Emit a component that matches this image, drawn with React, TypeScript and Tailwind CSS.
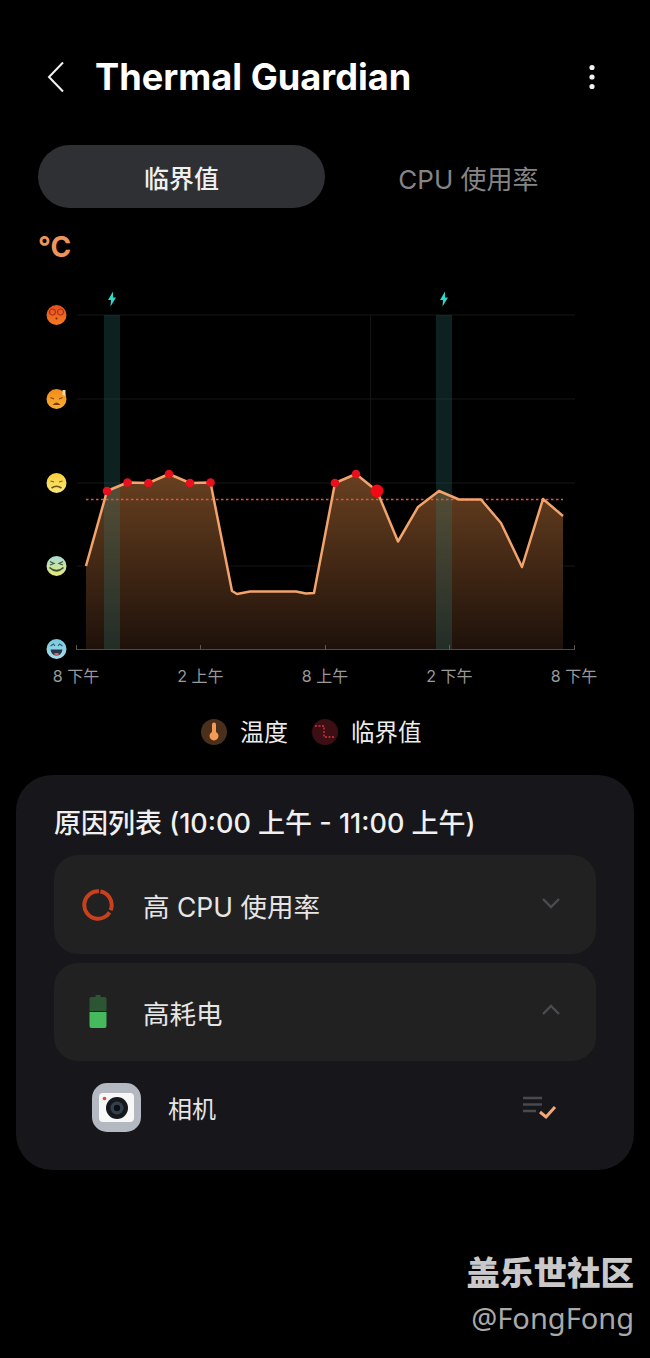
import React from 'react'

const CJK = "font-['Inter','Noto_Sans_CJK_SC',sans-serif]"

const tempPoints: Array<[number, number]> = [
  [86, 566], [107, 491], [127.5, 482.5], [148.5, 483], [169, 474], [190, 483], [210.5, 482.5],
  [232, 591], [237, 594], [250, 591.5], [296, 591.5], [306, 593.5], [314, 593], [335, 483],
  [356, 474], [377, 491], [398, 541.5], [418, 507], [439, 491], [459, 499.5], [481, 499.5],
  [501, 523], [522, 567], [543, 499], [563, 516],
]

const overLimit: Array<[number, number]> = [
  [107, 491], [127.5, 482.5], [148.5, 483], [169, 474], [190, 483], [210.5, 482.5], [335, 483], [356, 474],
]

const linePath = tempPoints.map(([x, y]) => `${x},${y}`).join(' ')
const areaPath = `86,649.5 ${linePath} 563,649.5`

function Face({ y, top, bottom, children }: { y: number; top: string; bottom: string; children: React.ReactNode }) {
  const id = `face-${y}`
  return (
    <g transform={`translate(56.5 ${y})`}>
      <defs>
        <linearGradient id={id} x1="0" y1="0" x2="0" y2="1">
          <stop offset="0" stopColor={top} />
          <stop offset="1" stopColor={bottom} />
        </linearGradient>
      </defs>
      <circle r="10" fill={`url(#${id})`} />
      {children}
    </g>
  )
}

function Bolt({ x }: { x: number }) {
  return <path transform={`translate(${x} 299)`} d="M1 -7.5 L-4 1 L-1 1 L-1.500 7.500 L4 -1.500 L1 -1.500 Z" fill="#2fd8c8" />
}

function Chart() {
  return (
    <svg width="650" height="376" viewBox="0 285 650 376" className="mt-[22px] block shrink-0">
      <defs>
        <linearGradient id="area" x1="0" y1="474" x2="0" y2="650" gradientUnits="userSpaceOnUse">
          <stop offset="0" stopColor="#684020" />
          <stop offset="1" stopColor="#1e110a" />
        </linearGradient>
      </defs>

      {[315, 399, 483, 566].map((y) => (
        <line key={y} x1="77" x2="575" y1={y} y2={y} stroke="#151717" strokeWidth="1" />
      ))}
      <line x1="370.5" x2="370.5" y1="315" y2="649" stroke="#141414" strokeWidth="1" />

      <polygon points={areaPath} fill="url(#area)" />
      <rect x="104" y="315" width="16" height="334" fill="#2e7f7a" fillOpacity="0.26" />
      <rect x="436" y="315" width="16" height="334" fill="#2e7f7a" fillOpacity="0.26" />

      <line x1="77" x2="575" y1="649.5" y2="649.5" stroke="#4d4a48" strokeWidth="1" />
      {[76, 200, 325, 449, 574].map((x) => (
        <line key={x} x1={x + 0.5} x2={x + 0.5} y1="645" y2="650" stroke="#5a5754" strokeWidth="1" />
      ))}

      <line x1="86" x2="563" y1="499.5" y2="499.5" stroke="#e2553f" strokeWidth="1.3" strokeDasharray="2.5 2.5" />
      <polyline points={linePath} fill="none" stroke="#f3a36c" strokeWidth="2.5" strokeLinejoin="round" />
      {overLimit.map(([x, y]) => (
        <circle key={x} cx={x} cy={y} r="4.3" fill="#e8101c" />
      ))}
      <circle cx="377" cy="491" r="6.5" fill="#f00a14" />

      <Bolt x={112} />
      <Bolt x={444} />

      <Face y={315} top="#e8501e" bottom="#f47a20">
        <circle cx="-4" cy="-3" r="3" fill="none" stroke="#a8301c" strokeWidth="1.2" />
        <circle cx="4" cy="-3" r="3" fill="none" stroke="#a8301c" strokeWidth="1.2" />
        <circle cx="0" cy="3.5" r="1" fill="#7a2010" />
      </Face>
      <Face y={399} top="#f28a1c" bottom="#f8b030">
        <path d="M-6 -1.500 L-2.500 0 M6 -1.500 L2.500 0" stroke="#8a3f10" strokeWidth="1.2" />
        <path d="M-4 6 Q0 1 4 6 Z" fill="#7a3a18" />
        <path d="M6 -9 L9 -9 L9 -3 L6 -4 Z" fill="#f5d9a8" />
      </Face>
      <Face y={483} top="#f8d03c" bottom="#f8e878">
        <path d="M-6 -2 L-2.500 -1 M6 -2 L2.500 -1" stroke="#7a6420" strokeWidth="1.2" />
        <path d="M-5 5 Q0 1.500 5 5" fill="none" stroke="#6e5418" strokeWidth="1.6" />
      </Face>
      <Face y={566} top="#a8dcd8" bottom="#e8e878">
        <path d="M-6.500 -4.500 L-2.500 -2.500 L-6.500 -1 M6.500 -4.500 L2.500 -2.500 L6.500 -1" fill="none" stroke="#3f5a3a" strokeWidth="1.2" />
        <path d="M-7 1.500 Q0 8 7 1.500" fill="none" stroke="#35502c" strokeWidth="1.7" />
      </Face>
      <Face y={649} top="#78c8e0" bottom="#a8dce8">
        <path d="M-6 -3 L-3 -5 L-1.500 -3 M6 -3 L3 -5 L1.500 -3" fill="none" stroke="#2a5a70" strokeWidth="1.1" />
        <path d="M-6 0.500 L6 0.500 Q5 6.500 0 6.500 Q-5 6.500 -6 0.500 Z" fill="#25354a" />
        <path d="M-3 5 Q0 3 3 5 Q0 7 -3 5 Z" fill="#e86a70" />
      </Face>
    </svg>
  )
}

function CpuIcon() {
  return (
    <svg width="32" height="32" viewBox="0 0 32 32" className="shrink-0">
      <circle
        cx="16"
        cy="16"
        r="13.700"
        fill="none"
        stroke="#c9411c"
        strokeWidth="4"
        strokeDasharray="24.500 2.200 57.300 2.100"
        transform="rotate(-80 16 16)"
      />
    </svg>
  )
}

function BatteryIcon() {
  return (
    <svg width="18" height="34" viewBox="0 0 18 34" className="shrink-0">
      <path d="M6.500 0 H11.500 V2 H15.500 Q17.500 2 17.500 4 V16 H0.500 V4 Q0.500 2 2.500 2 H6.500 Z" fill="#2c5533" />
      <path d="M0.500 17 H17.500 V31 Q17.500 33 15.500 33 H2.500 Q0.500 33 0.500 31 Z" fill="#46b95c" />
    </svg>
  )
}

function Chevron({ up }: { up?: boolean }) {
  return (
    <svg width="20" height="12" viewBox="0 0 20 12" className={up ? 'shrink-0 rotate-180' : 'shrink-0'}>
      <polyline points="2,2 10,10 18,2" fill="none" stroke="#4c4c50" strokeWidth="2.4" />
    </svg>
  )
}

function CameraIcon() {
  return (
    <svg width="49" height="49" viewBox="0 0 49 49" className="shrink-0">
      <rect width="49" height="49" rx="15" fill="#b4b8c0" />
      <rect x="7" y="10" width="35" height="29" rx="4" fill="#f7f7f7" />
      <circle cx="25" cy="25" r="11" fill="#16181c" />
      <circle cx="25" cy="25" r="6.500" fill="#33414e" />
      <circle cx="25" cy="25" r="3.200" fill="#0c0e12" />
      <circle cx="12.500" cy="15.500" r="1.800" fill="#e2463c" />
    </svg>
  )
}

function ChecklistIcon() {
  return (
    <svg width="34" height="24" viewBox="0 0 34 24" className="shrink-0">
      <path d="M0 2 H19 M0 8.500 H19 M0 15 H13" stroke="#4a4a4e" strokeWidth="2.600" />
      <polyline points="17,16 23,21 32,11" fill="none" stroke="#f3a878" strokeWidth="3" />
    </svg>
  )
}

function ReasonRow({ icon, label, up, h }: { icon: React.ReactNode; label: string; up?: boolean; h: string }) {
  return (
    <div className={`flex items-center rounded-[24px] bg-[#212121] ${h}`}>
      <div className="flex w-[87px] justify-center pl-[1px]">{icon}</div>
      <span className="ml-[2px] pt-[5px] text-[26.500px] leading-none text-[#e6e6e6]">{label}</span>
      <div className="ml-auto mr-[35px] pb-[4px]">
        <Chevron up={up} />
      </div>
    </div>
  )
}

export default function App() {
  const xLabels = ['8 下午', '2 上午', '8 上午', '2 下午', '8 下午']

  return (
    <div className={`flex h-[1358px] w-[650px] flex-col overflow-hidden bg-black ${CJK}`}>
      <header className="mt-[52px] flex h-[50px] shrink-0 items-center">
        <svg width="18" height="32" viewBox="0 0 18 32" className="ml-[47px] shrink-0">
          <polyline points="16,1.500 2,16 16,30.500" fill="none" stroke="#f2f2f2" strokeWidth="2" />
        </svg>
        <h1 className="ml-[30px] text-[36.200px] font-bold leading-none text-white">Thermal Guardian</h1>
        <svg width="6" height="26" viewBox="0 0 6 26" className="ml-auto mr-[55px] shrink-0">
          <circle cx="3" cy="3.500" r="2.600" fill="#f2f2f2" />
          <circle cx="3" cy="13" r="2.600" fill="#f2f2f2" />
          <circle cx="3" cy="22.500" r="2.600" fill="#f2f2f2" />
        </svg>
      </header>

      <div className="mt-[43px] flex h-[63px] shrink-0 items-center px-[38px]">
        <div className="flex h-full w-[287px] items-center justify-center rounded-full bg-[#2f3034] pt-[6px] text-[25px] font-medium text-[#f0f0f0]">
          临界值
        </div>
        <div className="flex h-full flex-1 items-center justify-center pt-[5px] text-[26px] text-[#858585]">CPU 使用率</div>
      </div>

      <div className="ml-[38px] mt-[23px] h-[32px] shrink-0 text-[28px] font-bold leading-[32px] text-[#f0955a]">°C</div>

      <Chart />

      <div className="mt-[1px] flex h-[28px] shrink-0 justify-between px-[26px]">
        {xLabels.map((label, i) => (
          <div key={i} className="w-[100px] text-center text-[16px] leading-[28px] text-[#9a9a9a]">
            {label}
          </div>
        ))}
      </div>

      <div className="mt-[24px] flex h-[36px] shrink-0 items-center pl-[201px]">
        <svg width="26" height="26" viewBox="0 0 26 26" className="shrink-0">
          <circle cx="13" cy="13" r="13" fill="#4a2f1c" />
          <path d="M11 5.500 a2 2 0 0 1 4 0 V13 a4.500 4.500 0 1 1 -4 0 Z" fill="#f39a55" />
        </svg>
        <span className="ml-[13px] pt-[2px] text-[24px] leading-none text-[#ececec]">温度</span>
        <svg width="26" height="26" viewBox="0 0 26 26" className="ml-[24px] shrink-0">
          <circle cx="13" cy="13" r="13" fill="#3c0f14" />
          <path d="M3 7 H12 V18 H22" fill="none" stroke="#d8333c" strokeWidth="1.300" strokeDasharray="2 1.500" />
        </svg>
        <span className="ml-[13px] pt-[2px] text-[23.500px] leading-none text-[#ececec]">临界值</span>
      </div>

      <section className="mx-4 mt-[25px] h-[395px] shrink-0 rounded-[36px] bg-[#17171b] px-[38px] pt-[28px]">
        <h2 className="h-[40px] pt-[1px] text-[27px] font-medium leading-[40px] whitespace-nowrap text-[#f0f0f0]">
          原因列表 (10:00 上午 - 11:00 上午)
        </h2>
        <div className="mt-[12px] flex flex-col gap-[9px]">
          <ReasonRow icon={<CpuIcon />} label="高 CPU 使用率" h="h-[99px]" />
          <ReasonRow icon={<BatteryIcon />} label="高耗电" up h="h-[98px]" />
        </div>
        <div className="mt-[22px] flex h-[49px] items-center pl-[38px] pr-[39px]">
          <CameraIcon />
          <span className="ml-[27px] pt-[4px] text-[24px] leading-none text-[#e6e6e6]">相机</span>
          <div className="ml-auto">
            <ChecklistIcon />
          </div>
        </div>
      </section>

      <div className="mt-[83px] flex shrink-0 flex-col items-end pr-[16px]">
        <div className="text-[33.500px] font-black leading-[40px] text-[#c9c9c9]">盖乐世社区</div>
        <div className="mt-[5px] font-['Noto_Sans',sans-serif] text-[29px] leading-[40px] text-[#a9a9a9]">@FongFong</div>
      </div>
    </div>
  )
}
